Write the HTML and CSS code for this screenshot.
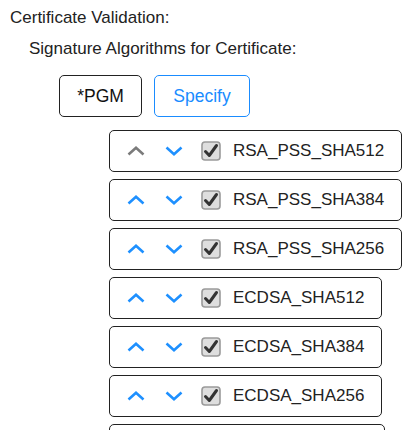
FILE: index.html
```html
<!DOCTYPE html>
<html lang="en">
<head>
	<meta charset="UTF-8">
	<title>Certificate Validation</title>
<link rel="stylesheet" href="styles.css">
</head>
<body>
	<div class="title">Certificate Validation:</div>
	<div class="subtitle">Signature Algorithms for Certificate:</div>
	<div class="btns">
		<button class="btn pgm">*PGM</button>
		<button class="btn blue">Specify</button>
	</div>
	<div class="list">
		<div class="row">
			<svg class="arr off" width="18" height="10" viewBox="0 0 18 10"><path d="M1.5 8.5 L9 1.8 L16.5 8.5"/></svg>
			<svg class="arr" width="18" height="10" viewBox="0 0 18 10"><path d="M1.5 1.5 L9 8.2 L16.5 1.5"/></svg>
			<svg class="chk" width="20" height="20" viewBox="0 0 20 20"><rect x="1" y="1" width="18" height="18" rx="3"/><path d="M4.5 10.5 L8.3 14.5 L15.5 4.5"/></svg>
			<span>RSA_PSS_SHA512</span>
		</div>
		<div class="row">
			<svg class="arr" width="18" height="10" viewBox="0 0 18 10"><path d="M1.5 8.5 L9 1.8 L16.5 8.5"/></svg>
			<svg class="arr" width="18" height="10" viewBox="0 0 18 10"><path d="M1.5 1.5 L9 8.2 L16.5 1.5"/></svg>
			<svg class="chk" width="20" height="20" viewBox="0 0 20 20"><rect x="1" y="1" width="18" height="18" rx="3"/><path d="M4.5 10.5 L8.3 14.5 L15.5 4.5"/></svg>
			<span>RSA_PSS_SHA384</span>
		</div>
		<div class="row">
			<svg class="arr" width="18" height="10" viewBox="0 0 18 10"><path d="M1.5 8.5 L9 1.8 L16.5 8.5"/></svg>
			<svg class="arr" width="18" height="10" viewBox="0 0 18 10"><path d="M1.5 1.5 L9 8.2 L16.5 1.5"/></svg>
			<svg class="chk" width="20" height="20" viewBox="0 0 20 20"><rect x="1" y="1" width="18" height="18" rx="3"/><path d="M4.5 10.5 L8.3 14.5 L15.5 4.5"/></svg>
			<span>RSA_PSS_SHA256</span>
		</div>
		<div class="row">
			<svg class="arr" width="18" height="10" viewBox="0 0 18 10"><path d="M1.5 8.5 L9 1.8 L16.5 8.5"/></svg>
			<svg class="arr" width="18" height="10" viewBox="0 0 18 10"><path d="M1.5 1.5 L9 8.2 L16.5 1.5"/></svg>
			<svg class="chk" width="20" height="20" viewBox="0 0 20 20"><rect x="1" y="1" width="18" height="18" rx="3"/><path d="M4.5 10.5 L8.3 14.5 L15.5 4.5"/></svg>
			<span>ECDSA_SHA512</span>
		</div>
		<div class="row">
			<svg class="arr" width="18" height="10" viewBox="0 0 18 10"><path d="M1.5 8.5 L9 1.8 L16.5 8.5"/></svg>
			<svg class="arr" width="18" height="10" viewBox="0 0 18 10"><path d="M1.5 1.5 L9 8.2 L16.5 1.5"/></svg>
			<svg class="chk" width="20" height="20" viewBox="0 0 20 20"><rect x="1" y="1" width="18" height="18" rx="3"/><path d="M4.5 10.5 L8.3 14.5 L15.5 4.5"/></svg>
			<span>ECDSA_SHA384</span>
		</div>
		<div class="row">
			<svg class="arr" width="18" height="10" viewBox="0 0 18 10"><path d="M1.5 8.5 L9 1.8 L16.5 8.5"/></svg>
			<svg class="arr" width="18" height="10" viewBox="0 0 18 10"><path d="M1.5 1.5 L9 8.2 L16.5 1.5"/></svg>
			<svg class="chk" width="20" height="20" viewBox="0 0 20 20"><rect x="1" y="1" width="18" height="18" rx="3"/><path d="M4.5 10.5 L8.3 14.5 L15.5 4.5"/></svg>
			<span>ECDSA_SHA256</span>
		</div>
		<div class="row last"></div>
	</div>
</body>
</html>
```

FILE: styles.css
```css
body{
	margin: 0;
	padding-top: 8px;
	font-family: "Liberation Sans", Arial, sans-serif;
	font-size: 17px;
	color: #222;
	background: #fff;
	overflow: hidden;
}
.title{
	padding-left: 10px;
	line-height: 20px;
}
.subtitle{
	padding-left: 29px;
	margin-top: 11px;
	line-height: 20px;
}
.btns{
	display: flex;
	gap: 12px;
	margin: 16px 0 0 59px;
}
.btn{
	font-family: inherit;
	font-size: 17.5px;
	height: 42px;
	width: 96px;
	padding: 0;
	background: #fff;
	color: #111;
	border: 1px solid #222;
	border-radius: 5px;
}
.btn.pgm{
	width: 83px;
}
.btn.blue{
	color: #1a8cff;
	border-color: #1a8cff;
}
.list{
	display: flex;
	flex-direction: column;
	align-items: flex-start;
	gap: 7px;
	margin: 13px 0 0 109px;
}
.row{
	display: flex;
	align-items: center;
	height: 42px;
	box-sizing: border-box;
	padding: 0 17px 0 17px;
	border: 1px solid #222;
	border-radius: 5px;
	white-space: nowrap;
}
.row.last{
	width: 276px;
}
.arr{
	fill: none;
	stroke: #1e90ff;
	stroke-width: 2.6;
	margin-right: 20px;
}
.arr + .arr{
	margin-right: 18px;
}
.arr.off{
	stroke: #7b7b7b;
}
.chk{
	margin-right: 12px;
}
.chk rect{
	fill: #dedede;
	stroke: #9a9a9a;
	stroke-width: 1.6;
}
.chk path{
	fill: none;
	stroke: #333;
	stroke-width: 3;
	stroke-linecap: round;
	stroke-linejoin: round;
}
```
